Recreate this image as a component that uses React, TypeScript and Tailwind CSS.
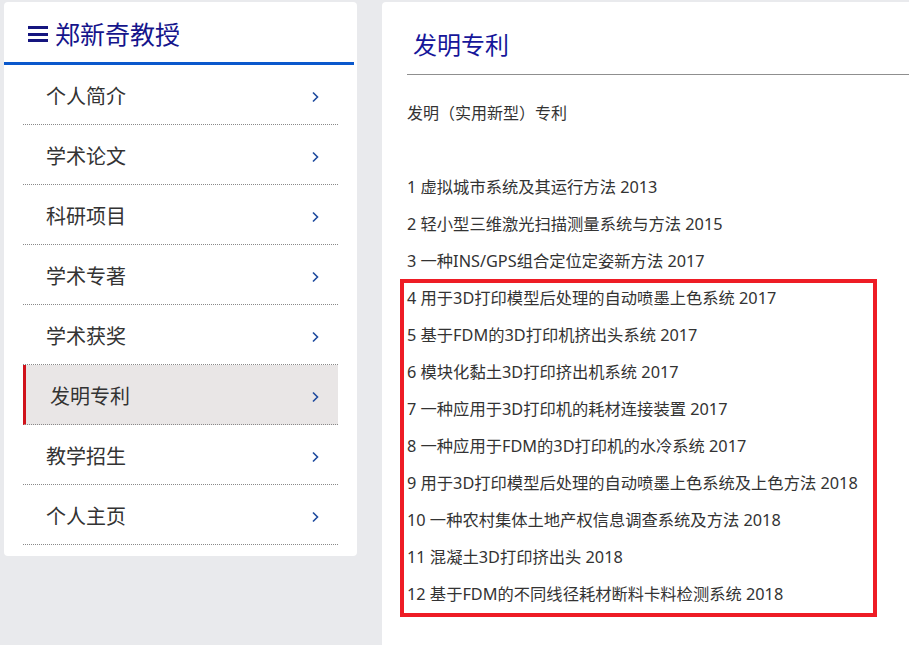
import React from 'react';

const menu = ['个人简介', '学术论文', '科研项目', '学术专著', '学术获奖', '发明专利', '教学招生', '个人主页'];

const patents = [
  '1 虚拟城市系统及其运行方法 2013',
  '2 轻小型三维激光扫描测量系统与方法 2015',
  '3 一种INS/GPS组合定位定姿新方法 2017',
  '4 用于3D打印模型后处理的自动喷墨上色系统 2017',
  '5 基于FDM的3D打印机挤出头系统 2017',
  '6 模块化黏土3D打印挤出机系统 2017',
  '7 一种应用于3D打印机的耗材连接装置 2017',
  '8 一种应用于FDM的3D打印机的水冷系统 2017',
  '9 用于3D打印模型后处理的自动喷墨上色系统及上色方法 2018',
  '10 一种农村集体土地产权信息调查系统及方法 2018',
  '11 混凝土3D打印挤出头 2018',
  '12 基于FDM的不同线径耗材断料卡料检测系统 2018',
];

const Chevron = () => (
  <svg width="8" height="12" viewBox="0 0 8 12" fill="none">
    <path d="M2 1.5 L6.5 6 L2 10.5" stroke="#1e4a9e" strokeWidth="1.6" />
  </svg>
);

const App: React.FC = () => {
  const active = '发明专利';
  return (
    <div
      className="w-[909px] h-[645px] overflow-hidden bg-[#e9eaed] flex items-start"
      style={{ fontFamily: '"Noto Sans", "Noto Sans CJK SC", sans-serif' }}
    >
      {/* Sidebar */}
      <aside className="ml-[4px] mt-[2px] w-[353px] h-[554px] bg-white rounded-[4px] shrink-0">
        <div className="mr-[3px] h-[63px] border-b-[3px] border-[#0a58cc] flex items-center pl-[24px] pt-[4px] gap-[7px]">
          <div className="flex flex-col gap-[3.5px] w-[20px]">
            <span className="block h-[3px] bg-[#15157f]" />
            <span className="block h-[3px] bg-[#15157f]" />
            <span className="block h-[3px] bg-[#15157f]" />
          </div>
          <span className="text-[25px] text-[#15158c] leading-none">郑新奇教授</span>
        </div>
        <ul className="ml-[19px] w-[315px]">
          {menu.map((item) => {
            const isActive = item === active;
            return (
              <li
                key={item}
                className={`h-[60px] border-b border-dotted border-[#8a8a8a] flex items-center justify-between pr-[19px] pt-[5px] ${
                  isActive ? 'bg-[#e9e6e6] border-l-[3px] border-l-[#d0121b] pl-[24px]' : 'pl-[23px]'
                }`}
                style={isActive ? { borderLeftStyle: 'solid' } : undefined}
              >
                <span className="text-[20px] text-[#333] leading-none">{item}</span>
                <Chevron />
              </li>
            );
          })}
        </ul>
      </aside>

      {/* Content */}
      <main className="relative ml-[25px] mt-[2px] w-[527px] h-[643px] bg-white rounded-tl-[4px] pl-[25px] shrink-0">
        <div className="border-b border-[#8f8f8f] pt-[25px] pb-[11px] pl-[6px]">
          <h1 className="text-[24px] leading-[36px] text-[#16169a] font-normal">发明专利</h1>
        </div>
        <div className="mt-[20px] text-[16.3px] text-[#333] leading-[37px]">
          <p className="text-[16px]">发明（实用新型）专利</p>
          <p>&nbsp;</p>
          {patents.map((p) => (
            <p key={p}>{p}</p>
          ))}
        </div>
        {/* highlight box */}
        <div className="absolute left-[18px] top-[277px] w-[477px] h-[338px] border-[4px] border-[#ee1c25] pointer-events-none" />
      </main>
    </div>
  );
};

export default App;
